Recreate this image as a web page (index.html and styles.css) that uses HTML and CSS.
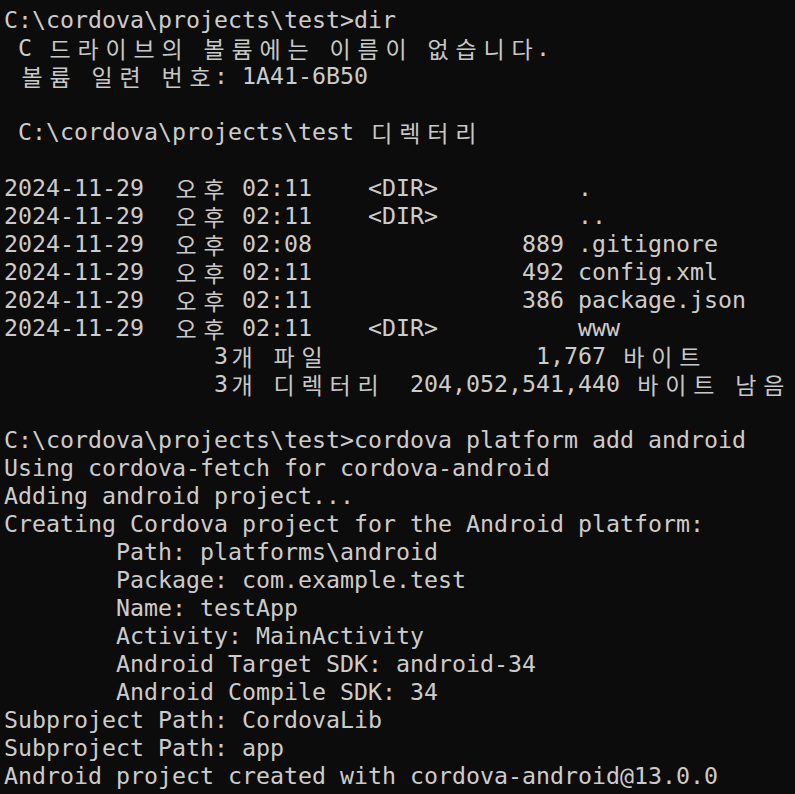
FILE: index.html
```html
<!DOCTYPE html>
<html lang="ko">
<head>
<meta charset="utf-8">
<title>Command Prompt</title>
<link rel="stylesheet" href="styles.css">
</head>
<body>
<div class="term">
<div class="ln">C:\cordova\projects\test&gt;dir</div>
<div class="ln"> C <span class="w">드</span><span class="w">라</span><span class="w">이</span><span class="w">브</span><span class="w">의</span> <span class="w">볼</span><span class="w">륨</span><span class="w">에</span><span class="w">는</span> <span class="w">이</span><span class="w">름</span><span class="w">이</span> <span class="w">없</span><span class="w">습</span><span class="w">니</span><span class="w">다</span>.</div>
<div class="ln"> <span class="w">볼</span><span class="w">륨</span> <span class="w">일</span><span class="w">련</span> <span class="w">번</span><span class="w">호</span>: 1A41-6B50</div>
<div class="ln"></div>
<div class="ln"> C:\cordova\projects\test <span class="w">디</span><span class="w">렉</span><span class="w">터</span><span class="w">리</span></div>
<div class="ln"></div>
<div class="ln">2024-11-29  <span class="w">오</span><span class="w">후</span> 02:11    &lt;DIR&gt;          .</div>
<div class="ln">2024-11-29  <span class="w">오</span><span class="w">후</span> 02:11    &lt;DIR&gt;          ..</div>
<div class="ln">2024-11-29  <span class="w">오</span><span class="w">후</span> 02:08               889 .gitignore</div>
<div class="ln">2024-11-29  <span class="w">오</span><span class="w">후</span> 02:11               492 config.xml</div>
<div class="ln">2024-11-29  <span class="w">오</span><span class="w">후</span> 02:11               386 package.json</div>
<div class="ln">2024-11-29  <span class="w">오</span><span class="w">후</span> 02:11    &lt;DIR&gt;          www</div>
<div class="ln">               3<span class="w">개</span> <span class="w">파</span><span class="w">일</span>               1,767 <span class="w">바</span><span class="w">이</span><span class="w">트</span></div>
<div class="ln">               3<span class="w">개</span> <span class="w">디</span><span class="w">렉</span><span class="w">터</span><span class="w">리</span>  204,052,541,440 <span class="w">바</span><span class="w">이</span><span class="w">트</span> <span class="w">남</span><span class="w">음</span></div>
<div class="ln"></div>
<div class="ln">C:\cordova\projects\test&gt;cordova platform add android</div>
<div class="ln">Using cordova-fetch for cordova-android</div>
<div class="ln">Adding android project...</div>
<div class="ln">Creating Cordova project for the Android platform:</div>
<div class="ln">        Path: platforms\android</div>
<div class="ln">        Package: com.example.test</div>
<div class="ln">        Name: testApp</div>
<div class="ln">        Activity: MainActivity</div>
<div class="ln">        Android Target SDK: android-34</div>
<div class="ln">        Android Compile SDK: 34</div>
<div class="ln">Subproject Path: CordovaLib</div>
<div class="ln">Subproject Path: app</div>
<div class="ln">Android project created with cordova-android@13.0.0</div>
</div>
</body>
</html>
```

FILE: styles.css
```css
html, body {
  margin: 0;
  padding: 0;
  background: #0c0c0c;
  height: 100%;
  overflow: hidden;
}

.term {
  padding: 6px 0 0 4px;
  color: #cccccc;
  font-family: "DejaVu Sans Mono", "Liberation Mono", "Noto Sans CJK KR", monospace;
  font-size: 23.25px;
  line-height: 28px;
}

.ln {
  height: 28px;
  white-space: pre;
}

.w {
  display: inline-block;
  width: 28px;
  height: 28px;
  text-align: center;
  vertical-align: top;
  font-family: "Noto Sans CJK KR", sans-serif;
  font-size: 23px;
  font-weight: 400;
  line-height: 28px;
  color: #c8c8c8;
}
```
